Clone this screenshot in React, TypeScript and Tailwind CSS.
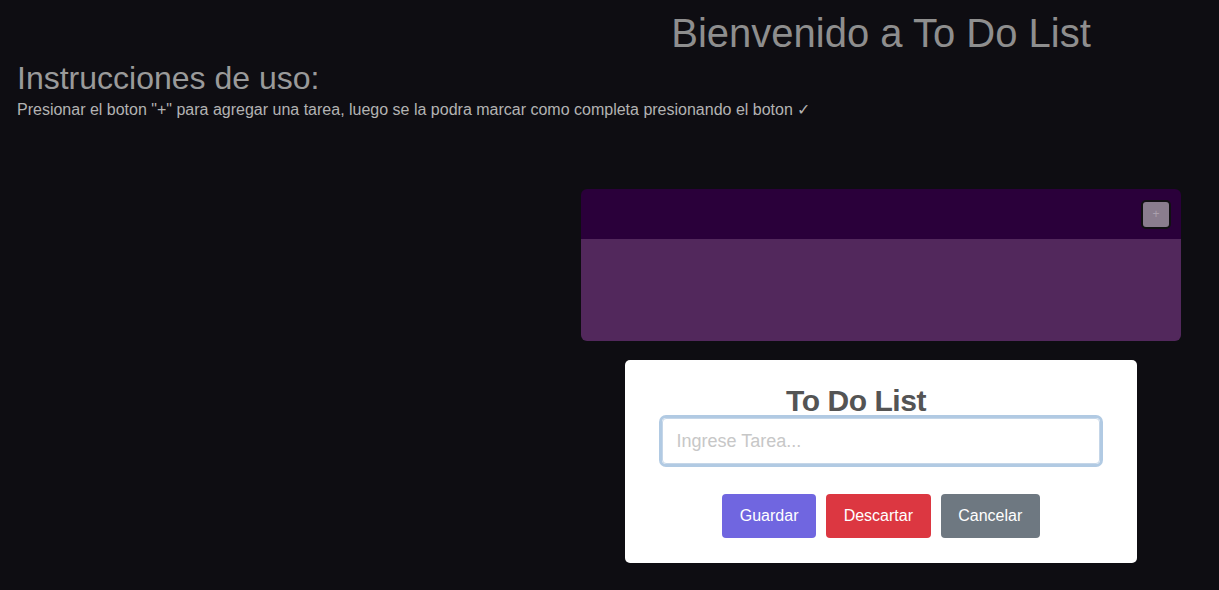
import React from "react";

export default function App() {
  return (
    <div
      className="min-h-screen w-full bg-[#0e0d12] overflow-hidden"
      style={{ fontFamily: '"Liberation Sans", Arial, sans-serif' }}
    >
      <div className="grid grid-cols-[581px_600px] pt-[10px]">
        <div />
        <h1 className="text-center text-[40px] leading-[46px] text-[#8e8e8e] font-normal">
          Bienvenido a To Do List
        </h1>
      </div>
      <div className="px-[17px] mt-[3.5px]">
        <h2 className="text-[32px] leading-[37px] text-[#9a9a9a] font-normal">
          Instrucciones de uso:
        </h2>
        <p className="mt-[4.5px] text-[16px] leading-[18.4px] text-[#b3b3b3]">
          Presionar el boton "+" para agregar una tarea, luego se la podra marcar como completa presionando el boton ✓
        </p>
      </div>
      <div className="grid grid-cols-[581px_600px] mt-[70px]">
        <div />
        <div className="flex flex-col">
          <div className="rounded-[6px] overflow-hidden">
            <div className="h-[50px] bg-[#2a003a] flex items-center justify-end pr-[10px]">
              <button className="w-[30px] h-[29px] rounded-[5px] border-2 border-[#111013] bg-[#8a7d8e] text-[#aaa0ad] text-[12px] leading-none flex items-center justify-center">
                +
              </button>
            </div>
            <div className="h-[102px] bg-[#52285c]" />
          </div>
          <div className="mt-[19px] mx-auto w-[512px] bg-white rounded-[5px] pt-[24px] pb-[25px] flex flex-col items-center">
            <h2 className="text-[30px] leading-[34.5px] font-bold text-[#545454] tracking-[-0.45px] pr-[50px]">
              To Do List
            </h2>
            <input
              autoFocus
              placeholder="Ingrese Tarea..."
              className="w-[438px] h-[46px] -mt-[0.5px] border border-[#c5d6e8] rounded-[4px] px-[13.5px] text-[18px] text-[#545454] placeholder:text-[#c7c7c7] outline-none shadow-[0_0_0_3px_rgba(100,150,200,0.5)]"
            />
            <div className="flex mt-[30px]">
              <button className="mx-[5px] h-[44px] px-[17.6px] rounded-[4px] bg-[#7066e0] text-white text-[16px]">
                Guardar
              </button>
              <button className="mx-[5px] h-[44px] px-[17.6px] rounded-[4px] bg-[#dc3741] text-white text-[16px]">
                Descartar
              </button>
              <button className="mx-[5px] h-[44px] px-[17.6px] rounded-[4px] bg-[#6e7881] text-white text-[16px]">
                Cancelar
              </button>
            </div>
          </div>
        </div>
      </div>
    </div>
  );
}
